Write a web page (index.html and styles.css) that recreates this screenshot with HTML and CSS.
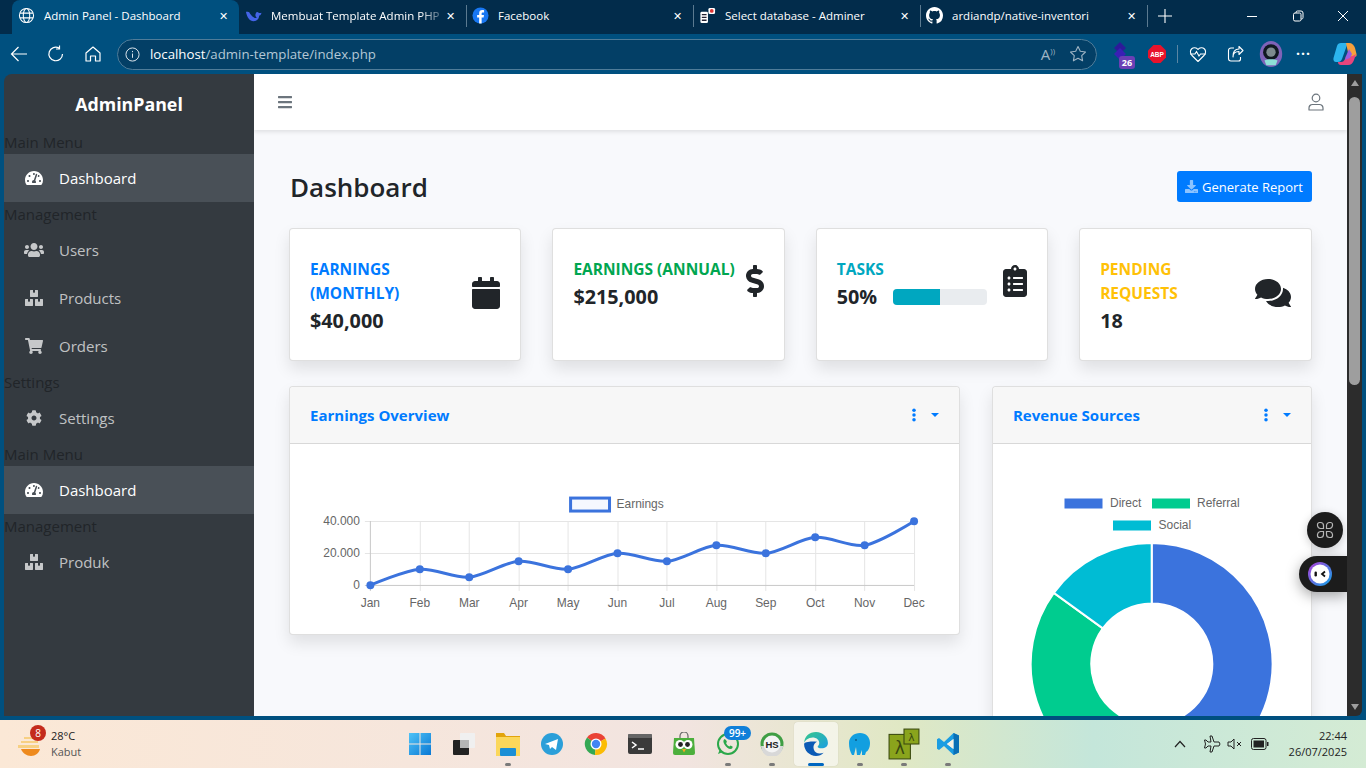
FILE: index.html
```html
<!DOCTYPE html>
<html lang="en">
<head>
<meta charset="utf-8">
<title>Admin Panel - Dashboard</title>
<link rel="stylesheet" href="styles.css">
</head>
<body>
<div class="tabstrip">
  <div class="tab active">
    <svg class="tab-ico" viewBox="0 0 18 18" fill="none" stroke="#fff" stroke-width="1.1"><circle cx="9" cy="9" r="7.5"/><ellipse cx="9" cy="9" rx="3.4" ry="7.5"/><path d="M2 6.5h14M2 11.5h14"/></svg>
    <span class="tab-title">Admin Panel - Dashboard</span><span class="tab-x">✕</span>
  </div>
  <div class="tab">
    <svg class="tab-ico" viewBox="0 0 18 18"><path d="M1 5c1 6 4 10 8 10 4 0 6-3 6-6 1 0 2-1 2.500-3-1 .5-2.500.5-3 0-1-1-2.500-1-3 .5-1 2-.5 4 1 5-2 1-6-2-8-6-1-.5-2-.5-3-.5z" fill="#4464e8"/></svg>
    <span class="tab-title fade">Membuat Template Admin PHP</span><span class="tab-x">✕</span>
  </div>
  <div class="tab sep">
    <svg class="tab-ico" viewBox="0 0 18 18"><circle cx="9" cy="9" r="8.5" fill="#1877f2"/><path d="M10.2 17.4v-6.3h2.1l.4-2.5h-2.5V7c0-.8.3-1.3 1.4-1.3h1.2V3.5c-.5-.1-1.2-.2-2-.2-2 0-3.2 1.2-3.2 3.3v2H5.4v2.5h2.2v6.3z" fill="#fff"/></svg>
    <span class="tab-title">Facebook</span><span class="tab-x">✕</span>
  </div>
  <div class="tab sep">
    <svg class="tab-ico" viewBox="0 0 18 18"><rect x="1.5" y="5" width="8" height="12" rx="1.5" fill="#fff"/><path d="M3 8h5M3 11h5M3 14h5" stroke="#223" stroke-width="1.4"/><rect x="10" y="1" width="7" height="6.5" rx="1.5" fill="#fff"/><circle cx="13.5" cy="4.2" r="2" fill="#d33"/></svg>
    <span class="tab-title">Select database - Adminer</span><span class="tab-x">✕</span>
  </div>
  <div class="tab sep">
    <svg class="tab-ico" viewBox="0 0 16 16"><path fill="#fff" d="M8 0C3.58 0 0 3.58 0 8c0 3.54 2.29 6.53 5.47 7.59.4.07.55-.17.55-.38 0-.19-.01-.82-.01-1.49-2.01.37-2.53-.49-2.69-.94-.09-.23-.48-.94-.82-1.13-.28-.15-.68-.52-.01-.53.63-.01 1.08.58 1.23.82.72 1.21 1.87.87 2.33.66.07-.52.28-.87.51-1.07-1.78-.2-3.64-.89-3.64-3.95 0-.87.31-1.59.82-2.15-.08-.2-.36-1.02.08-2.12 0 0 .67-.21 2.2.82.64-.18 1.32-.27 2-.27s1.36.09 2 .27c1.53-1.04 2.2-.82 2.2-.82.44 1.1.16 1.92.08 2.12.51.56.82 1.27.82 2.15 0 3.07-1.87 3.75-3.65 3.95.29.25.54.73.54 1.48 0 1.07-.01 1.93-.01 2.2 0 .21.15.46.55.38A8.01 8.01 0 0 0 16 8c0-4.42-3.58-8-8-8z"/></svg>
    <span class="tab-title">ardiandp/native-inventori</span><span class="tab-x">✕</span>
  </div>
  <div class="tab-plus sep">
    <svg viewBox="0 0 14 14" width="14" height="14" stroke="#fff" stroke-width="1.1"><path d="M7 0v14M0 7h14"/></svg>
  </div>
  <div class="win-ctrls">
    <svg viewBox="0 0 12 12" width="12" height="12" stroke="#fff"><path d="M1 6.5h10"/></svg>
    <svg viewBox="0 0 12 12" width="12" height="12" stroke="#fff" fill="none"><rect x="1.5" y="3" width="7.5" height="8" rx="1.5"/><path d="M4 3V2.5A1.5 1.5 0 0 1 5.5 1H9a2 2 0 0 1 2 2v4.5A1.5 1.5 0 0 1 9 9"/></svg>
    <svg viewBox="0 0 12 12" width="12" height="12" stroke="#fff"><path d="M1 1l10 10M11 1L1 11"/></svg>
  </div>
</div>

<div class="toolbar">
  <div class="nav-btns">
    <svg viewBox="0 0 18 18" width="18" height="18" fill="none" stroke="#fff" stroke-width="1.2"><path d="M17 9H1.5M8.5 2L1.5 9l7 7"/></svg>
    <svg viewBox="0 0 18 18" width="18" height="18" fill="none" stroke="#fff" stroke-width="1.2"><path d="M15.5 9A6.8 6.8 0 1 1 12 3M12.5 .5V4H9"/></svg>
    <svg viewBox="0 0 18 18" width="18" height="18" fill="none" stroke="#fff" stroke-width="1.2"><path d="M2 8l7-6 7 6v8h-4.5v-5h-5v5H2z" stroke-linejoin="round"/></svg>
  </div>
  <div class="addr">
    <svg class="addr-info" viewBox="0 0 16 16" width="15" height="15" fill="none" stroke="#e8eef3" stroke-width="1"><circle cx="8" cy="8" r="7"/><path d="M8 7v4.5M8 4.2v1.3"/></svg>
    <span class="url"><b>localhost</b>/admin-template/index.php</span>
    <span class="read">A<sup>))</sup></span>
    <svg viewBox="0 0 18 18" width="18" height="18" fill="none" stroke="#9fb4c4" stroke-width="1.1"><path d="M9 1.5l2.3 4.8 5.2.7-3.8 3.6.9 5.2L9 13.3l-4.6 2.5.9-5.2L1.5 7l5.2-.7z" stroke-linejoin="round"/></svg>
  </div>
  <div class="ext">
    <span class="ext-puzzle">
      <svg viewBox="0 0 20 20" width="20" height="20"><path d="M8 0l6 6-6 6-6-6z" fill="#2d1a99"/><path d="M8 6l6 6-6 6-6-6z" fill="#3a1fb5"/></svg>
      <span class="badge-26">26</span>
    </span>
    <svg class="e-abp" viewBox="0 0 18 18" width="18" height="18"><path d="M5.5 0h7L18 5.5v7L12.5 18h-7L0 12.5v-7z" fill="#e8132b"/><text x="9" y="11.8" class="abp">ABP</text></svg>
    <span class="ext-div"></span>
    <svg class="e-heart" viewBox="0 0 18 18" width="18" height="18" fill="none" stroke="#fff" stroke-width="1.1"><path d="M3 10.5C1 8.5 1 5.500 2.500 4 4.500 2 7.500 2.500 9 4.500 10.500 2.500 13.500 2 15.500 4 17 5.500 17 8.500 15 10.500L9 16.500z" stroke-linejoin="round"/><path d="M1 9h5l1.500-2.500L10 11l1.500-2H17"/></svg>
    <svg class="e-share" viewBox="0 0 18 18" width="18" height="18" fill="none" stroke="#fff" stroke-width="1.1"><path d="M8 3H5a2.500 2.500 0 0 0-2.500 2.500v8A2.500 2.500 0 0 0 5 16h7.500a2 2 0 0 0 2-2v-2"/><path d="M7 12c0-3.500 2.500-5.500 6-5.500V9.500L17 5.500 13 1.500V4C9 4 6.500 7 7 12z" stroke-linejoin="round"/></svg>
    <svg class="e-avatar" viewBox="0 0 24 30" width="24" height="28"><ellipse cx="12" cy="15" rx="12" ry="14" fill="#7f63b8"/><circle cx="12" cy="13" r="8.500" fill="#101820"/><circle cx="12" cy="13" r="5" fill="#7d8a8e"/><path d="M5 22c3-2 11-2 14 0l-2 5H7z" fill="#8fe0d6"/></svg>
    <span class="dots">···</span>
    <svg viewBox="0 0 24 24" width="24" height="24"><path d="M8 1h5c1 0 1.500 1 1 2L9 17c-.8 2-2 3-4 3H3c-2 0-3-2-2.500-4L4 4c.5-2 2-3 4-3z" fill="#2cb5ee"/><path d="M13 1h3c3 0 5 2 6 5l1.500 6c.5 2-.5 3-2.500 3h-5z" fill="#f6a03c"/><path d="M23 12l-2 6c-1 3-3 5-6 5H8c-2 0-3-1-3-3h3c2 0 3-1 4-3l1-3c2 1 6 1 10-2z" fill="#e8457c"/><path d="M13 14l3-7 3 5-2 4-5 2z" fill="#9a5ee0"/></svg>
  </div>
</div>

<div class="viewport">
  <aside class="sidebar">
    <div class="brand">AdminPanel</div>
    <div class="side-label">Main Menu</div>
    <div class="side-item on"><svg class="side-ico" viewBox="0 0 576 512"><path d="M288 32C128.94 32 0 160.94 0 320c0 52.8 14.25 102.26 39.06 144.8 5.61 9.62 16.3 15.2 27.44 15.2h443c11.14 0 21.83-5.58 27.44-15.2C561.75 422.26 576 372.8 576 320c0-159.06-128.94-288-288-288zm0 64c14.71 0 26.58 10.13 30.32 23.65-1.11 2.26-2.64 4.23-3.45 6.67l-9.22 27.67c-5.13 3.49-10.97 6.01-17.64 6.01-17.67 0-32-14.33-32-32S270.33 96 288 96zM96 384c-17.67 0-32-14.33-32-32s14.33-32 32-32 32 14.33 32 32-14.33 32-32 32zm48-160c-17.67 0-32-14.33-32-32s14.33-32 32-32 32 14.33 32 32-14.33 32-32 32zm246.77-72.41l-61.33 184C343.13 347.33 352 364.54 352 384c0 11.72-3.38 22.55-8.88 32H232.88c-5.5-9.45-8.88-20.28-8.88-32 0-33.94 26.5-61.43 59.9-63.59l61.34-184.01c4.17-12.56 17.73-19.45 30.36-15.17 12.57 4.19 19.35 17.79 15.17 30.36zm14.66 57.2l15.52-46.55c3.47-1.29 7.13-2.23 11.05-2.23 17.67 0 32 14.33 32 32s-14.33 32-32 32c-11.38-.01-20.89-6.28-26.57-15.22zM480 384c-17.67 0-32-14.33-32-32s14.33-32 32-32 32 14.33 32 32-14.33 32-32 32z"/></svg>Dashboard</div>
    <div class="side-label">Management</div>
    <div class="side-item"><svg class="side-ico" viewBox="0 0 640 512"><path d="M96 224c35.3 0 64-28.7 64-64s-28.7-64-64-64-64 28.7-64 64 28.7 64 64 64zm448 0c35.3 0 64-28.7 64-64s-28.7-64-64-64-64 28.7-64 64 28.7 64 64 64zm32 32h-64c-17.6 0-33.5 7.1-45.1 18.6 40.3 22.1 68.9 62 75.1 109.4h66c17.7 0 32-14.3 32-32v-32c0-35.3-28.7-64-64-64zm-256 0c61.9 0 112-50.1 112-112S381.9 32 320 32 208 82.1 208 144s50.1 112 112 112zm76.8 32h-8.3c-20.8 10-43.9 16-68.5 16s-47.6-6-68.5-16h-8.3C179.6 288 128 339.6 128 403.2V432c0 26.5 21.5 48 48 48h288c26.5 0 48-21.5 48-48v-28.8c0-63.6-51.6-115.2-115.2-115.2zm-223.7-13.4C161.5 263.1 145.6 256 128 256H64c-35.3 0-64 28.7-64 64v32c0 17.7 14.3 32 32 32h65.9c6.3-47.4 34.9-87.3 75.2-109.4z"/></svg>Users</div>
    <div class="side-item"><svg class="side-ico" viewBox="0 0 576 512"><path d="M560 288h-80v96l-32-21.3-32 21.3v-96h-80c-8.8 0-16 7.2-16 16v192c0 8.8 7.2 16 16 16h224c8.8 0 16-7.2 16-16V304c0-8.8-7.2-16-16-16zm-384-64h224c8.8 0 16-7.2 16-16V16c0-8.8-7.2-16-16-16h-80v96l-32-21.3L256 96V0h-80c-8.8 0-16 7.2-16 16v192c0 8.8 7.2 16 16 16zm64 64h-80v96l-32-21.3L96 384v-96H16c-8.8 0-16 7.2-16 16v192c0 8.8 7.2 16 16 16h224c8.8 0 16-7.2 16-16V304c0-8.8-7.2-16-16-16z"/></svg>Products</div>
    <div class="side-item"><svg class="side-ico" viewBox="0 0 576 512"><path d="M528.12 301.319l47.273-208C578.806 78.301 567.391 64 551.99 64H159.208l-9.166-44.81C147.758 8.021 137.93 0 126.529 0H24C10.745 0 0 10.745 0 24v16c0 13.255 10.745 24 24 24h69.883l70.248 343.435C147.325 417.1 136 435.222 136 456c0 30.928 25.072 56 56 56s56-25.072 56-56c0-15.674-6.447-29.835-16.824-40h209.647C430.447 426.165 424 440.326 424 456c0 30.928 25.072 56 56 56s56-25.072 56-56c0-22.172-12.888-41.332-31.579-50.405l5.517-24.276c3.413-15.018-8.002-29.319-23.403-29.319H218.117l-6.545-32h293.145c11.206 0 20.92-7.754 23.403-18.681z"/></svg>Orders</div>
    <div class="side-label">Settings</div>
    <div class="side-item"><svg class="side-ico" viewBox="0 0 512 512"><path d="M487.4 315.7l-42.6-24.6c4.3-23.2 4.3-47 0-70.2l42.6-24.6c4.9-2.8 7.1-8.6 5.5-14-11.1-35.6-30-67.8-54.7-94.6-3.8-4.1-10-5.1-14.8-2.3L380.8 110c-17.9-15.4-38.5-27.3-60.8-35.1V25.8c0-5.6-3.9-10.5-9.4-11.7-36.7-8.2-74.3-7.8-109.2 0-5.5 1.2-9.4 6.1-9.4 11.7V75c-22.2 7.9-42.8 19.8-60.8 35.1L88.7 85.5c-4.9-2.8-11-1.9-14.8 2.3-24.7 26.7-43.6 58.9-54.7 94.6-1.7 5.4.6 11.2 5.5 14L67.3 221c-4.3 23.2-4.3 47 0 70.2l-42.6 24.6c-4.9 2.8-7.1 8.6-5.5 14 11.1 35.6 30 67.8 54.7 94.6 3.8 4.1 10 5.1 14.8 2.3l42.6-24.6c17.9 15.4 38.5 27.3 60.8 35.1v49.2c0 5.6 3.9 10.5 9.4 11.7 36.7 8.2 74.3 7.8 109.2 0 5.5-1.2 9.4-6.1 9.4-11.7v-49.2c22.2-7.9 42.8-19.8 60.8-35.1l42.6 24.6c4.9 2.8 11 1.9 14.8-2.3 24.7-26.7 43.6-58.9 54.7-94.6 1.5-5.5-.7-11.3-5.6-14.1zM256 336c-44.1 0-80-35.9-80-80s35.9-80 80-80 80 35.9 80 80-35.9 80-80 80z"/></svg>Settings</div>
    <div class="side-label">Main Menu</div>
    <div class="side-item on"><svg class="side-ico" viewBox="0 0 576 512"><path d="M288 32C128.94 32 0 160.94 0 320c0 52.8 14.25 102.26 39.06 144.8 5.61 9.62 16.3 15.2 27.44 15.2h443c11.14 0 21.83-5.58 27.44-15.2C561.75 422.26 576 372.8 576 320c0-159.06-128.94-288-288-288zm0 64c14.71 0 26.58 10.13 30.32 23.65-1.11 2.26-2.64 4.23-3.45 6.67l-9.22 27.67c-5.13 3.49-10.97 6.01-17.64 6.01-17.67 0-32-14.33-32-32S270.33 96 288 96zM96 384c-17.67 0-32-14.33-32-32s14.33-32 32-32 32 14.33 32 32-14.33 32-32 32zm48-160c-17.67 0-32-14.33-32-32s14.33-32 32-32 32 14.33 32 32-14.33 32-32 32zm246.77-72.41l-61.33 184C343.13 347.33 352 364.54 352 384c0 11.72-3.38 22.55-8.88 32H232.88c-5.5-9.45-8.88-20.28-8.88-32 0-33.94 26.5-61.43 59.9-63.59l61.34-184.01c4.17-12.56 17.73-19.45 30.36-15.17 12.57 4.19 19.35 17.79 15.17 30.36zm14.66 57.2l15.52-46.55c3.47-1.29 7.13-2.23 11.05-2.23 17.67 0 32 14.33 32 32s-14.33 32-32 32c-11.38-.01-20.89-6.28-26.57-15.22zM480 384c-17.67 0-32-14.33-32-32s14.33-32 32-32 32 14.33 32 32-14.33 32-32 32z"/></svg>Dashboard</div>
    <div class="side-label">Management</div>
    <div class="side-item"><svg class="side-ico" viewBox="0 0 576 512"><path d="M560 288h-80v96l-32-21.3-32 21.3v-96h-80c-8.8 0-16 7.2-16 16v192c0 8.8 7.2 16 16 16h224c8.8 0 16-7.2 16-16V304c0-8.8-7.2-16-16-16zm-384-64h224c8.8 0 16-7.2 16-16V16c0-8.8-7.2-16-16-16h-80v96l-32-21.3L256 96V0h-80c-8.8 0-16 7.2-16 16v192c0 8.8 7.2 16 16 16zm64 64h-80v96l-32-21.3L96 384v-96H16c-8.8 0-16 7.2-16 16v192c0 8.8 7.2 16 16 16h224c8.8 0 16-7.2 16-16V304c0-8.8-7.2-16-16-16z"/></svg>Produk</div>
  </aside>

  <main class="main">
    <div class="topbar">
      <svg class="top-bars" viewBox="0 0 448 512"><path d="M16 132h416c8.837 0 16-7.163 16-16V76c0-8.837-7.163-16-16-16H16C7.163 60 0 67.163 0 76v40c0 8.837 7.163 16 16 16zm0 160h416c8.837 0 16-7.163 16-16v-40c0-8.837-7.163-16-16-16H16c-8.837 0-16 7.163-16 16v40c0 8.837 7.163 16 16 16zm0 160h416c8.837 0 16-7.163 16-16v-40c0-8.837-7.163-16-16-16H16c-8.837 0-16 7.163-16 16v40c0 8.837 7.163 16 16 16z"/></svg>
      <svg class="top-user" viewBox="0 0 16 18" fill="none" stroke="#6c757d" stroke-width="1.2"><circle cx="8" cy="5" r="3.800"/><path d="M1 17v-2a3.500 3.500 0 0 1 3.500-3.500h7A3.500 3.500 0 0 1 15 15v2z" stroke-linejoin="round"/></svg>
    </div>
    <div class="content">
      <div class="page-head">
        <h1>Dashboard</h1>
        <button class="report"><svg viewBox="0 0 512 512"><path d="M216 0h80c13.3 0 24 10.7 24 24v168h87.7c17.8 0 26.7 21.5 14.1 34.1L269.7 378.3c-7.5 7.5-19.8 7.5-27.3 0L90.1 226.1c-12.6-12.6-3.7-34.1 14.1-34.1H192V24c0-13.3 10.7-24 24-24zm296 376v112c0 13.3-10.7 24-24 24H24c-13.3 0-24-10.7-24-24V376c0-13.3 10.7-24 24-24h146.7l49 49c20.1 20.1 52.5 20.1 72.6 0l49-49H488c13.3 0 24 10.7 24 24zm-124 88c0-11-9-20-20-20s-20 9-20 20 9 20 20 20 20-9 20-20zm64 0c0-11-9-20-20-20s-20 9-20 20 9 20 20 20 20-9 20-20z"/></svg>Generate Report</button>
      </div>

      <div class="stats">
        <div class="stat">
          <div class="stat-row">
            <div class="stat-text">
              <div class="stat-title blue">Earnings (Monthly)</div>
              <div class="stat-val">$40,000</div>
            </div>
            <svg class="stat-ico i-cal" viewBox="0 0 448 512"><path d="M12 192h424c6.6 0 12 5.4 12 12v260c0 26.5-21.5 48-48 48H48c-26.5 0-48-21.5-48-48V204c0-6.6 5.4-12 12-12zm436-44v-36c0-26.5-21.5-48-48-48h-48V12c0-6.6-5.4-12-12-12h-40c-6.6 0-12 5.4-12 12v52H160V12c0-6.6-5.4-12-12-12h-40c-6.6 0-12 5.4-12 12v52H48C21.5 64 0 85.5 0 112v36c0 6.6 5.4 12 12 12h424c6.6 0 12-5.4 12-12z"/></svg>
          </div>
        </div>
        <div class="stat">
          <div class="stat-row">
            <div class="stat-text">
              <div class="stat-title green">Earnings (Annual)</div>
              <div class="stat-val">$215,000</div>
            </div>
            <svg class="stat-ico i-usd" viewBox="0 0 288 512"><path d="M209.2 233.4l-108-31.6C88.7 198.2 80 186.5 80 173.5c0-16.3 13.2-29.5 29.5-29.5h66.3c12.2 0 24.2 3.7 34.2 10.5 6.1 4.1 14.3 3.1 19.5-2l34.8-34c7.1-6.9 6.1-18.4-1.8-24.5C238 74.8 207.4 64.1 176 64V16c0-8.8-7.2-16-16-16h-32c-8.8 0-16 7.2-16 16v48h-2.5C45.8 64-5.4 118.7.5 183.6c4.2 46.1 39.4 83.6 83.8 96.6l102.5 30c12.5 3.7 21.2 15.3 21.2 28.3 0 16.3-13.2 29.5-29.5 29.5h-66.3C100 368 88 364.3 78 357.500c-6.1-4.1-14.3-3.1-19.5 2l-34.8 34c-7.1 6.9-6.1 18.4 1.8 24.5 24.5 19.2 55.1 29.9 86.5 30v48c0 8.8 7.2 16 16 16h32c8.8 0 16-7.2 16-16v-48.2c46.6-.9 90.3-28.6 105.7-72.7 21.5-61.6-14.6-124.8-72.5-141.7z"/></svg>
          </div>
        </div>
        <div class="stat">
          <div class="stat-row">
            <div class="stat-text">
              <div class="stat-title cyan">Tasks</div>
              <div class="task-row">
                <div class="stat-val">50%</div>
                <div class="progress"><div class="progress-fill"></div></div>
              </div>
            </div>
            <svg class="stat-ico i-clip" viewBox="0 0 384 512"><path d="M336 64h-80c0-35.3-28.7-64-64-64s-64 28.7-64 64H48C21.5 64 0 85.5 0 112v352c0 26.5 21.5 48 48 48h288c26.5 0 48-21.5 48-48V112c0-26.5-21.500-48-48-48zM96 424c-13.3 0-24-10.7-24-24s10.7-24 24-24 24 10.7 24 24-10.7 24-24 24zm0-96c-13.3 0-24-10.7-24-24s10.7-24 24-24 24 10.7 24 24-10.7 24-24 24zm0-96c-13.3 0-24-10.7-24-24s10.7-24 24-24 24 10.7 24 24-10.7 24-24 24zm96-192c13.3 0 24 10.7 24 24s-10.7 24-24 24-24-10.7-24-24 10.7-24 24-24zm128 368c0 4.4-3.6 8-8 8H168c-4.4 0-8-3.6-8-8v-16c0-4.4 3.6-8 8-8h144c4.4 0 8 3.6 8 8v16zm0-96c0 4.4-3.6 8-8 8H168c-4.4 0-8-3.6-8-8v-16c0-4.4 3.6-8 8-8h144c4.4 0 8 3.6 8 8v16zm0-96c0 4.4-3.6 8-8 8H168c-4.4 0-8-3.6-8-8v-16c0-4.4 3.6-8 8-8h144c4.4 0 8 3.6 8 8v16z"/></svg>
          </div>
        </div>
        <div class="stat">
          <div class="stat-row">
            <div class="stat-text">
              <div class="stat-title yellow">Pending Requests</div>
              <div class="stat-val">18</div>
            </div>
            <svg class="stat-ico i-com" viewBox="0 0 576 512"><path d="M416 192c0-88.4-93.1-160-208-160S0 103.6 0 192c0 34.3 14.1 65.9 38 92-13.4 30.2-35.5 54.2-35.8 54.5-2.2 2.3-2.8 5.7-1.5 8.7S4.8 352 8 352c36.6 0 66.9-12.3 88.7-25 32.2 15.7 70.3 25 111.3 25 114.9 0 208-71.6 208-160zm122 220c23.9-26 38-57.7 38-92 0-66.9-53.500-124.2-129.3-148.1.9 6.6 1.3 13.3 1.3 20.1 0 105.9-107.7 192-240 192-10.8 0-21.3-.8-31.7-1.9C207.8 439.6 281.8 480 368 480c41 0 79.1-9.2 111.3-25 21.8 12.7 52.1 25 88.7 25 3.2 0 6.1-1.9 7.3-4.8 1.3-2.9.7-6.3-1.5-8.7-.3-.3-22.4-24.2-35.8-54.5z"/></svg>
          </div>
        </div>
      </div>

      <div class="charts">
        <section class="panel">
          <header class="panel-head">
            <span class="panel-title">Earnings Overview</span>
            <span class="panel-menu"><svg viewBox="0 0 6 16" width="6" height="14" fill="#007bff"><circle cx="3" cy="2.500" r="2"/><circle cx="3" cy="8" r="2"/><circle cx="3" cy="13.500" r="2"/></svg><span class="caret"></span></span>
          </header>
          <svg class="chart-line" viewBox="290 444 670 190">
            <g class="grid-lines">
              <path d="M365 521.500H915M365 553.500H915M420.500 521V591M469.500 521V591M519.500 521V591M568.500 521V591M618.500 521V591M667.500 521V591M717.500 521V591M766.500 521V591M816.500 521V591M865.500 521V591M915.500 521V591"/>
            </g>
            <path class="grid-axis" d="M365 585.500H915M370.500 521V591"/>
            <rect class="legend-box" x="571" y="498" width="39" height="13"/>
            <text class="lbl" x="617" y="508">Earnings</text>
            <g class="lbl end">
              <text x="360" y="525">40.000</text>
              <text x="360" y="557">20.000</text>
              <text x="360" y="589">0</text>
            </g>
            <g class="lbl mid">
              <text x="370.500" y="607">Jan</text><text x="420" y="607">Feb</text><text x="469.500" y="607">Mar</text><text x="519" y="607">Apr</text><text x="568.500" y="607">May</text><text x="618" y="607">Jun</text><text x="667.500" y="607">Jul</text><text x="717" y="607">Aug</text><text x="766.500" y="607">Sep</text><text x="816" y="607">Oct</text><text x="865.500" y="607">Nov</text><text x="915" y="607">Dec</text>
            </g>
            <path class="line" d="M370.500 585.300C370.500 585.300 405.200 570.500 420 569.300C434.900 568.100 454.700 578.500 469.500 577.300C484.400 576.100 504.200 562.500 519 561.300C533.900 560.100 553.700 570.500 568.500 569.300C583.400 568.100 603.200 554.500 618 553.300C632.900 552.100 652.700 562.500 667.500 561.300C682.400 560.100 702.200 546.500 717 545.300C731.900 544.100 751.700 554.500 766.500 553.300C781.400 552.100 801.200 538.500 816 537.300C830.900 536.100 850.700 547.700 865.500 545.300C880.400 542.900 915 521.300 915 521.300"/>
            <g class="pts">
              <circle cx="370.500" cy="585.300" r="4"/><circle cx="420" cy="569.300" r="4"/><circle cx="469.500" cy="577.300" r="4"/><circle cx="519" cy="561.300" r="4"/><circle cx="568.500" cy="569.300" r="4"/><circle cx="618" cy="553.300" r="4"/><circle cx="667.500" cy="561.300" r="4"/><circle cx="717" cy="545.300" r="4"/><circle cx="766.500" cy="553.300" r="4"/><circle cx="816" cy="537.300" r="4"/><circle cx="865.500" cy="545.300" r="4"/><circle cx="915" cy="521.300" r="4"/>
            </g>
          </svg>
        </section>
        <section class="panel">
          <header class="panel-head">
            <span class="panel-title">Revenue Sources</span>
            <span class="panel-menu"><svg viewBox="0 0 6 16" width="6" height="14" fill="#007bff"><circle cx="3" cy="2.500" r="2"/><circle cx="3" cy="8" r="2"/><circle cx="3" cy="13.500" r="2"/></svg><span class="caret"></span></span>
          </header>
          <svg class="chart-donut" viewBox="993 444.500 317.500 350">
            <rect class="c-direct" x="1064.500" y="499" width="38" height="10"/>
            <text class="lbl" x="1110" y="507">Direct</text>
            <rect class="c-ref" x="1152" y="499" width="38" height="10"/>
            <text class="lbl" x="1197" y="507">Referral</text>
            <rect class="c-soc" x="1113" y="521" width="38" height="10"/>
            <text class="lbl" x="1158.500" y="529">Social</text>
            <path class="c-direct seg" d="M1151.700 543.500A121 121 0 1 1 1114.300 779.600L1133 722A60.500 60.500 0 1 0 1151.700 604Z"/>
            <path class="c-ref seg" d="M1114.300 779.600A121 121 0 0 1 1053.800 593.400L1102.800 628.900A60.500 60.500 0 0 0 1133 722Z"/>
            <path class="c-soc seg" d="M1053.800 593.400A121 121 0 0 1 1151.700 543.500L1151.700 604A60.500 60.500 0 0 0 1102.800 628.900Z"/>
          </svg>
        </section>
      </div>
    </div>
    <div class="float-round">
      <svg viewBox="0 0 20 20" width="20" height="20" fill="none" stroke="#b5b5b5" stroke-width="1.2"><path d="M4.500 2.500h1a3 3 0 0 1 3 3v3h-3a3.500 3.500 0 0 1-3-3v-1a2 2 0 0 1 2-2zM15.500 2.500h-1a3 3 0 0 0-3 3v3h3a3.500 3.500 0 0 0 3-3v-1a2 2 0 0 0-2-2zM4.500 17.500h1a3 3 0 0 0 3-3v-3h-3a3.500 3.500 0 0 0-3 3v1a2 2 0 0 0 2 2zM15.500 17.500h-1a3 3 0 0 1-3-3v-3h3a3.500 3.500 0 0 1 3 3v1a2 2 0 0 1-2 2z"/></svg>
    </div>
    <div class="float-pill">
      <svg viewBox="0 0 24 24" width="24" height="24"><defs><linearGradient id="mono" x1="0" y1="0" x2="1" y2="1"><stop offset="0" stop-color="#b23bd8"/><stop offset="1" stop-color="#0ea5e9"/></linearGradient></defs><circle cx="12" cy="12" r="12" fill="url(#mono)"/><circle cx="12" cy="12" r="9.500" fill="#fff"/><rect x="6.500" y="9.500" width="2.400" height="5" rx="1.200" fill="#111"/><path d="M17 9.500l-3 2.500 3 2.500" stroke="#111" stroke-width="1.800" fill="none"/></svg>
    </div>
  </main>

  <div class="scrollbar">
    <span class="sb-up"></span>
    <span class="sb-thumb"></span>
    <span class="sb-down"></span>
  </div>
</div>

<footer class="taskbar">
  <div class="weather">
    <span class="w-ico">
      <svg viewBox="0 0 24 22" width="24" height="22"><path d="M6 3h10v2H6zM3 7h17v2H3zM0 11h21v3H0z" fill="#f7d083"/><path d="M3 15h19c-1 4-4.500 7-9 7-4.500 0-8.500-3-10-7z" fill="#ee8a1d"/></svg>
      <span class="w-badge">8</span>
    </span>
    <span class="w-text"><span>28°C</span><span class="w-sub">Kabut</span></span>
  </div>
  <div class="apps">
    <div class="app">
      <svg viewBox="0 0 24 24" width="24" height="24"><defs><linearGradient id="win" x1="0" y1="0" x2="1" y2="1"><stop offset="0" stop-color="#4fc3f7"/><stop offset="1" stop-color="#0a78d4"/></linearGradient></defs><path d="M1 1h10.500v10.500H1zM12.500 1H23v10.500H12.500zM1 12.500h10.500V23H1zM12.500 12.500H23V23H12.500z" fill="url(#win)"/></svg>
    </div>
    <div class="app">
      <svg viewBox="0 0 24 24" width="24" height="24"><rect x="1" y="8" width="16" height="15" rx="1" fill="#222"/><rect x="8" y="1" width="15" height="15" rx="1" fill="#f0f0f0"/><rect x="8" y="8" width="9" height="8" fill="#b5b5b5"/></svg>
    </div>
    <div class="app dot">
      <svg viewBox="0 0 24 24" width="24" height="24"><path d="M0 1h8l2 3h14v20H0z" fill="#e2a40c"/><path d="M0 5h24v19H0z" fill="#fbd75b"/><rect x="4" y="16" width="16" height="8" rx="1" fill="#1b8fd6"/></svg>
    </div>
    <div class="app">
      <svg viewBox="0 0 24 24" width="24" height="24"><circle cx="12" cy="12" r="11" fill="#2b9fd9"/><path d="M5 12l13-5-2 11-4-3-2 2-1-4z" fill="#fff"/></svg>
    </div>
    <div class="app">
      <svg viewBox="0 0 24 24" width="24" height="24"><path d="M12 12L21.500 6.500A11 11 0 0 0 3 5.500z" fill="#ea4335"/><path d="M12 12L3 5.500A11 11 0 0 0 11 23z" fill="#34a853"/><path d="M12 12L11 23A11 11 0 0 0 21.500 6.500z" fill="#fbbc05"/><circle cx="12" cy="12" r="5.500" fill="#fff"/><circle cx="12" cy="12" r="4.200" fill="#4285f4"/></svg>
    </div>
    <div class="app">
      <svg viewBox="0 0 24 24" width="24" height="24"><rect y="2" width="24" height="20" rx="2" fill="#3a3a3a"/><rect y="2" width="24" height="4" rx="1" fill="#666"/><path d="M4 10l4 3-4 3" stroke="#fff" fill="none" stroke-width="1.500"/><path d="M10 17h6" stroke="#fff" stroke-width="1.500"/></svg>
    </div>
    <div class="app">
      <svg viewBox="0 0 24 24" width="24" height="24"><path d="M8 6V4a4 4 0 0 1 8 0v2" fill="none" stroke="#666" stroke-width="1.200"/><path d="M2 6h20l1 15a2 2 0 0 1-2 2H3a2 2 0 0 1-2-2z" fill="#4caf3c"/><circle cx="8" cy="12.500" r="4.500" fill="#fff"/><circle cx="16" cy="12.500" r="4.500" fill="#fff"/><circle cx="8.500" cy="12.500" r="2.400" fill="#222"/><circle cx="15.500" cy="12.500" r="2.400" fill="#222"/><path d="M10 17h4l-2 3.500z" fill="#f5a623"/></svg>
    </div>
    <div class="app dot">
      <svg viewBox="0 0 24 24" width="24" height="24" fill="none"><circle cx="12" cy="12" r="10" stroke="#2ba84a" stroke-width="2"/><path d="M2 22l2-5 3 3z" fill="#2ba84a"/><path d="M8.500 7c-1.500 1-1.500 3 0 5.500s4 4.500 6 4.500c1.500 0 2.500-1.500 2-2.500l-2-1-1 1c-1.500-.5-3-2-3.500-3.500l1-1-1-2z" fill="#2ba84a"/></svg>
      <span class="wa-badge">99+</span>
    </div>
    <div class="app dot">
      <svg viewBox="0 0 24 24" width="24" height="24"><circle cx="12" cy="12" r="11.500" fill="#3f9e44"/><path d="M1 14a11 11 0 0 0 22 0z" fill="#d8d8d8"/><circle cx="12" cy="12" r="8.500" fill="#f4f4f4"/><text x="12" y="15.500" class="hs">HS</text></svg>
    </div>
    <div class="app cur">
      <svg viewBox="0 0 24 24" width="26" height="26"><defs><linearGradient id="edge" x1="0" y1="0" x2="1" y2="1"><stop offset="0" stop-color="#38c88a"/><stop offset="1" stop-color="#1b9de2"/></linearGradient></defs><path d="M1 12C1 5 6 1 12 1c6.500 0 11 5 11 10 0 3-2.500 5-6 5-2.500 0-3.500-1-3.500-1.500 0-.8 1.500-1 1.500-3.500 0-3-3-5-6-5-4 0-8 3-8 6z" fill="url(#edge)"/><path d="M1 12c0 6 5 11 11 11 3 0 5-1 7-3-4 1.500-8 .5-9-3-1-3 .5-6 3-7-5-1-12 0-12 2z" fill="#0c5bb5"/></svg>
      <span class="cur-bar"></span>
    </div>
    <div class="app dot">
      <svg viewBox="0 0 24 24" width="24" height="26"><path d="M12 1c6 0 10 4 10 10 0 5-2 8-4 9l-1 3h-3v-5l-2 5H9l-1-8-2 8H4c-2-4-3-7-3-12C1 5 6 1 12 1z" fill="#129fe0"/><circle cx="8" cy="8" r="1" fill="#085c8a"/></svg>
    </div>
    <div class="app dot">
      <svg viewBox="0 0 30 30" width="32" height="32"><rect x="1" y="6" width="20" height="23" fill="#8aa41c" stroke="#3a4a10"/><rect x="15" y="1" width="14" height="14" fill="#8aa41c" stroke="#3a4a10"/><text x="11" y="24" class="lam">λ</text><text x="22" y="12" class="lam sm">λ</text></svg>
    </div>
    <div class="app dot">
      <svg viewBox="0 0 24 24" width="24" height="24"><path d="M17.500 1L23 3.500v17L17.500 23 8 14l-5 4-2-1.200v-9.600L3 6l5 4z" fill="#1b9de2"/><path d="M17.500 7L11 12l6.500 5z" fill="#fff"/><path d="M17.500 1L23 3.500v17L17.500 23z" fill="#0a6fb5"/><path d="M17.500 7v10L11 12z" fill="#f7f2e4"/></svg>
    </div>
  </div>
  <div class="tray">
    <svg viewBox="0 0 12 8" width="12" height="8" fill="none" stroke="#222" stroke-width="1.200"><path d="M1 7l5-5.500L11 7"/></svg>
    <div class="tray-ico">
      <svg viewBox="0 0 18 18" width="18" height="18" fill="none" stroke="#222" stroke-width="1"><path d="M7 1h2l2 6h5l1 2-1 2h-5l-2 6H7l1-6H5l-2 2H1.500l1-4-1-4H3l2 2h3z" stroke-linejoin="round"/></svg>
      <svg class="t-vol" viewBox="0 0 16 16" width="16" height="16" fill="none" stroke="#222" stroke-width="1"><path d="M1 6v4h3l3 3V3L4 6zM10 6l4 4M14 6l-4 4"/></svg>
      <svg viewBox="0 0 18 12" width="18" height="12"><rect x=".5" y=".5" width="14.500" height="11" rx="2" fill="none" stroke="#222"/><rect x="2.500" y="2.500" width="10.500" height="7" fill="#222"/><rect x="16" y="4" width="1.500" height="4" fill="#222"/></svg>
    </div>
    <div class="clock"><span>22:44</span><span>26/07/2025</span></div>
  </div>
</footer>
</body>
</html>
```
FILE: styles.css
```css
* { box-sizing: border-box; }
html, body { height: 100%; }
body {
  margin: 0;
  height: 100vh;
  overflow: hidden;
  display: flex;
  flex-direction: column;
  background: #00507f;
  font-family: "Open Sans", "Noto Sans", sans-serif;
  color: #212529;
}
svg { display: block; flex: none; }

/* browser tabs */
.tabstrip {
  height: 34px;
  flex: none;
  display: flex;
  align-items: stretch;
  padding-left: 12px;
  background: #022c4b;
  color: #fff;
  font-size: 11.500px;
}
.tab {
  width: 227px;
  position: relative;
  display: flex;
  align-items: center;
  padding: 0 10px 3px 5px;
}
.tab.active { background: #00507f; border-radius: 8px 8px 0 0; padding-left: 5px; }
.tab-ico { width: 17px; height: 17px; margin: 0 9px 0 1px; }
.tab-title { flex: 1; white-space: nowrap; overflow: hidden; }
.fade { -webkit-mask-image: linear-gradient(90deg, #000 88%, rgba(0,0,0,.3)); mask-image: linear-gradient(90deg, #000 88%, rgba(0,0,0,.3)); }
.tab-x { width: 12px; font-size: 11px; text-align: center; margin-left: 4px; }
.sep::before {
  content: "";
  position: absolute;
  left: 0;
  top: 5px;
  height: 22px;
  width: 1px;
  background: #5b7a90;
}
.tab-plus { position: relative; width: 36px; display: flex; align-items: center; justify-content: center; padding-bottom: 3px; }
.win-ctrls { margin-left: auto; width: 138px; padding: 0 17px 3px 18px; display: flex; align-items: center; justify-content: space-between; }

/* toolbar */
.toolbar { height: 40px; flex: none; display: flex; align-items: center; background: #00507f; color: #fff; padding-left: 10px; }
.nav-btns { display: flex; gap: 19px; width: 107px; flex: none; }
.addr {
  width: 980px;
  flex: none;
  height: 31px;
  border: 1px solid #4f7c99;
  border-radius: 16px;
  background: #033f66;
  display: flex;
  align-items: center;
  padding: 0 9px 0 7px;
}
.addr-info { margin-right: 10px; }
.url { flex: 1; font-size: 13.250px; color: #b4c8d6; white-space: nowrap; }
.url b { font-weight: 400; color: #fff; }
.read { font-size: 15px; color: #9fb4c4; margin-right: 14px; line-height: 1; }
.read sup { font-size: 8px; }
.ext { display: flex; align-items: center; padding-left: 15px; }
.ext > * { margin-right: 15px; }
.ext-puzzle { position: relative; width: 23px; height: 24px; margin-right: 13px; }
.badge-26 {
  position: absolute;
  right: 0;
  bottom: -3px;
  width: 16px;
  height: 13px;
  border-radius: 3px;
  background: #6b3fb5;
  color: #fff;
  font-size: 9px;
  font-weight: 700;
  line-height: 13px;
  text-align: center;
}
.abp { font: 700 6.500px "Liberation Sans", sans-serif; fill: #fff; text-anchor: middle; }
.e-abp { margin-right: 11px; }
.ext-div { width: 1px; height: 18px; background: #5b86a3; margin-right: 11px; }
.e-heart { margin-right: 19px; }
.e-share { margin-right: 15px; }
.e-avatar { margin-right: 13px; }
.dots { font-size: 14px; font-weight: 700; width: 22px; line-height: 1; letter-spacing: 1px; }

/* viewport */
.viewport { flex: 1; min-height: 0; display: flex; margin: 0 4px 4px; }
.sidebar { width: 250px; flex: none; background: #343a40; border-radius: 8px 0 0 0; font-size: 15px; }
.brand { height: 56px; padding-top: 4px; display: flex; align-items: center; justify-content: center; color: #fff; font-size: 17.800px; font-weight: 700; }
.side-label { height: 24px; line-height: 24px; color: #212529; }
.side-item { height: 48px; display: flex; align-items: center; padding-left: 20px; color: rgba(255,255,255,.7); fill: rgba(255,255,255,.72); }
.side-item.on { background: #495057; color: #fff; fill: #fff; }
.side-ico { width: 20px; height: 16px; margin-right: 15px; }

.main { flex: 1; min-width: 0; position: relative; overflow: hidden; background: #f8f9fc; }
.topbar {
  height: 56px;
  display: flex;
  align-items: center;
  justify-content: space-between;
  padding: 0 23px 0 24px;
  background: #fff;
  box-shadow: 0 2px 4px rgba(0,0,0,.1);
  position: relative;
}
.top-bars { width: 14px; height: 16px; fill: #6c757d; }
.top-user { width: 16px; height: 18px; }
.content { padding: 41px 35.500px 0 35px; }
.page-head { display: flex; align-items: center; justify-content: space-between; height: 31px; margin-bottom: 26px; }
h1 { margin: 2px 0 0 1px; font-size: 26px; font-weight: 600; line-height: 35px; }
.report {
  height: 31px;
  padding: 0 8.500px;
  display: flex;
  align-items: center;
  gap: 4px;
  font: 400 13px "Open Sans", sans-serif;
  color: #fff;
  background: #007bff;
  border: 0;
  border-radius: 3px;
}
.report svg { width: 13px; height: 13px; fill: rgba(255,255,255,.55); }

.stats { display: grid; grid-template-columns: repeat(4, 1fr); column-gap: 31px; margin-bottom: 25.500px; }
.stat {
  height: 132.500px;
  padding: 28px 20px 0;
  background: #fff;
  border: 1px solid rgba(0,0,0,.125);
  border-radius: 4px;
  box-shadow: 0 8px 16px rgba(0,0,0,.1);
}
.stat-row { display: flex; align-items: center; }
.stat-text { flex: 1; min-width: 0; margin-right: 8px; }
.stat-title { font-size: 15.500px; font-weight: 700; line-height: 24px; text-transform: uppercase; margin-bottom: 4px; }
.blue { color: #007bff; }
.green { color: #00a650; }
.cyan { color: #00a7c0; }
.yellow { color: #ffc107; }
.stat-val { font-size: 19.800px; font-weight: 700; line-height: 24px; }
.task-row { display: flex; align-items: center; padding-right: 8px; }
.task-row .stat-val { margin-right: 16px; width: 40px; }
.progress { flex: 1; height: 16px; background: #e9ecef; border-radius: 4px; overflow: hidden; }
.progress-fill { width: 50%; height: 100%; background: #00a7c0; }
.stat-ico { height: 32px; fill: #212529; margin-bottom: 4px; }
.i-cal { width: 28px; }
.i-usd { width: 18px; }
.i-clip { width: 24px; }
.i-com { width: 36px; }

.charts { display: grid; grid-template-columns: minmax(0, 2.1fr) minmax(0, 1fr); column-gap: 32px; align-items: start; }
.panel {
  background: #fff;
  border: 1px solid rgba(0,0,0,.125);
  border-radius: 4px;
  box-shadow: 0 8px 16px rgba(0,0,0,.1);
}
.panel-head {
  height: 56.500px;
  display: flex;
  align-items: center;
  justify-content: space-between;
  padding: 0 20px;
  background: #f7f7f7;
  border-bottom: 1px solid rgba(0,0,0,.125);
  border-radius: 4px 4px 0 0;
}
.panel-title { font-size: 15px; font-weight: 700; color: #007bff; }
.panel-menu { display: flex; align-items: center; gap: 14px; }
.caret { width: 0; height: 0; border: 4px solid transparent; border-top-color: #007bff; border-bottom: 0; }
.chart-line { width: 669px; height: 190px; overflow: visible; }
.chart-donut { width: 317.500px; height: 350px; }
.grid-lines path { fill: none; stroke: #e5e5e5; stroke-width: 1; }
.grid-axis { fill: none; stroke: #c8c8c8; stroke-width: 1; }
.lbl, .lbl text { font: 12px "Liberation Sans", Arial, sans-serif; fill: #666; }
.end text { text-anchor: end; }
.mid text { text-anchor: middle; }
.legend-box { fill: #f5f8fe; stroke: #3b73dd; stroke-width: 3; }
.line { fill: none; stroke: #3b73dd; stroke-width: 3; }
.pts circle { fill: #3b73dd; }
.c-direct { fill: #3b73dd; }
.c-ref { fill: #00cc8f; }
.c-soc { fill: #00bcd4; }
.seg { stroke: #fff; stroke-width: 2; }

.float-round {
  position: absolute;
  left: 1053px;
  top: 438px;
  width: 36px;
  height: 36px;
  border-radius: 50%;
  background: #1c1c1c;
  display: flex;
  align-items: center;
  justify-content: center;
  box-shadow: 0 2px 10px rgba(0,0,0,.2);
}
.float-pill {
  position: absolute;
  right: 0;
  top: 482px;
  width: 48px;
  height: 36px;
  border-radius: 18px 0 0 18px;
  background: #1c1c1c;
  display: flex;
  align-items: center;
  padding-left: 9px;
  box-shadow: 0 4px 14px rgba(0,0,0,.35);
}

.scrollbar {
  width: 15px;
  flex: none;
  display: flex;
  flex-direction: column;
  align-items: center;
  background: #2c2c2c;
  border-radius: 0 0 6px 0;
  padding: 6px 0;
}
.sb-up { width: 0; height: 0; border: 4.500px solid transparent; border-bottom: 6px solid #9e9e9e; border-top: 0; }
.sb-thumb { width: 11px; height: 288px; margin-top: 11px; background: #9e9e9e; border-radius: 6px; }
.sb-down { margin-top: auto; width: 0; height: 0; border: 4.500px solid transparent; border-top: 6px solid #9e9e9e; border-bottom: 0; }

/* taskbar */
.taskbar {
  height: 48px;
  flex: none;
  display: flex;
  align-items: center;
  position: relative;
  background: linear-gradient(90deg, #fbe8d6 0%, #f6e6dc 30%, #f2e4e0 50%, #e0e8c4 66%, #c4e6da 80%, #d4ebd4 100%);
  color: #222;
  font-size: 11px;
}
.weather { width: 398px; flex: none; display: flex; align-items: center; padding-left: 18px; }
.w-ico { position: relative; width: 24px; height: 22px; margin-right: 9px; margin-top: 1px; }
.w-badge {
  position: absolute;
  left: 12px;
  top: -9px;
  width: 16px;
  height: 16px;
  border-radius: 50%;
  background: #c42b1c;
  color: #fff;
  font-size: 10px;
  line-height: 16px;
  text-align: center;
}
.w-text { display: flex; flex-direction: column; line-height: 16px; }
.w-sub { color: #555; }
.apps { display: flex; }
.app { position: relative; width: 44px; height: 44px; display: flex; align-items: center; justify-content: center; }
.dot::after {
  content: "";
  position: absolute;
  left: 19px;
  bottom: 0;
  width: 6px;
  height: 3px;
  border-radius: 2px;
  background: #7a7a7a;
}
.cur { background: rgba(255,255,255,.55); border-radius: 4px; box-shadow: 0 0 1px rgba(0,0,0,.2); }
.cur-bar { position: absolute; left: 14px; bottom: 0; width: 16px; height: 3px; border-radius: 2px; background: #0067c0; }
.wa-badge {
  position: absolute;
  left: 18px;
  top: 4px;
  width: 27px;
  height: 14px;
  border-radius: 7px;
  background: #0f7fd9;
  color: #fff;
  font-size: 10px;
  font-weight: 600;
  line-height: 14px;
  text-align: center;
}
.hs { font: 700 9.500px "Liberation Sans", sans-serif; fill: #222; text-anchor: middle; }
.lam { font: 16px "DejaVu Sans", sans-serif; fill: #3a4a10; text-anchor: middle; }
.lam.sm { font-size: 10px; }
.tray { position: absolute; right: 19px; top: 0; height: 48px; display: flex; align-items: center; }
.tray-ico { display: flex; align-items: center; gap: 8px; margin: 0 20px 0 17px; }
.t-vol { margin-left: -2px; }
.clock { display: flex; flex-direction: column; align-items: flex-end; line-height: 16px; }
```
